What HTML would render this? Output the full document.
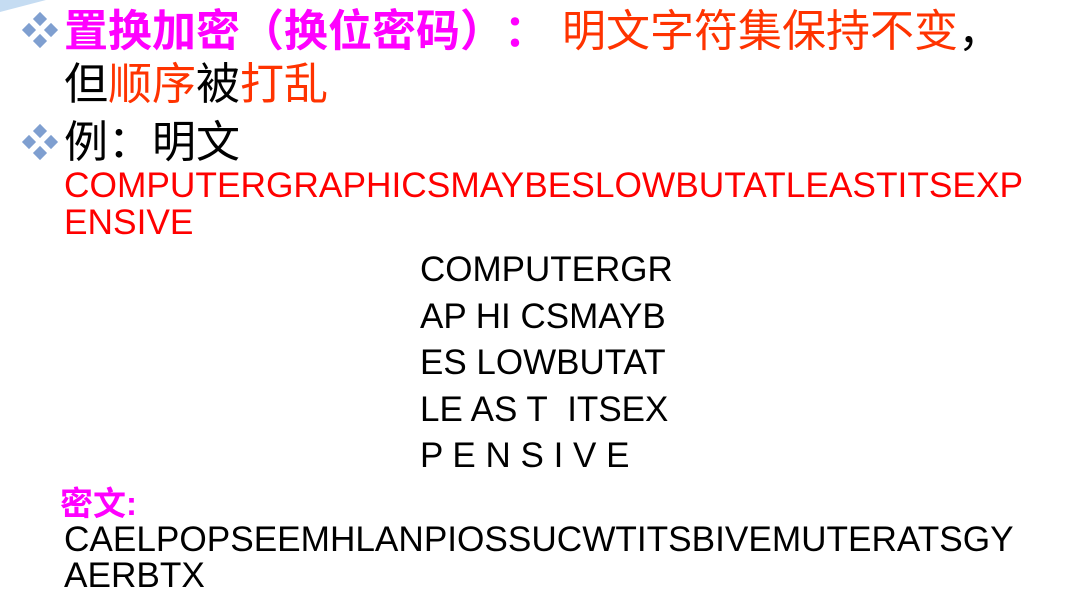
<!DOCTYPE html>
<html><head><meta charset="utf-8"><style>
body{margin:0;width:1068px;height:591px;background:#fff;position:relative;overflow:hidden;font-family:"Liberation Sans","Noto Sans CJK SC",sans-serif;}
.l{position:absolute;white-space:nowrap;line-height:1;}
.cn{font-size:44px;}
.m{color:#f0f;}
.o{color:#ff3300;}
.r{color:#f00;font-size:35.3px;}
.b{font-size:35.2px;color:#000;}
.c{font-size:35px;color:#000;left:420px;}
.p{display:inline-block;width:44px;}
.pr{display:inline-block;width:44px;text-align:right;}
.pc{display:inline-block;width:58px;}
</style></head><body>
<svg style="position:absolute;left:0;top:0" width="1068" height="591">
<polygon points="0,0 46,0 0,12" fill="#c5dcf2"/>
<g fill="#7f9fd0">
<g transform="translate(40,30)"><rect x="-5" y="-16" width="10" height="10" transform="rotate(45 0 -11)"/><rect x="-5" y="6" width="10" height="10" transform="rotate(45 0 11)"/><rect x="-16" y="-5" width="10" height="10" transform="rotate(45 -11 0)"/><rect x="6" y="-5" width="10" height="10" transform="rotate(45 11 0)"/></g>
<g transform="translate(40,142)"><rect x="-5" y="-16" width="10" height="10" transform="rotate(45 0 -11)"/><rect x="-5" y="6" width="10" height="10" transform="rotate(45 0 11)"/><rect x="-16" y="-5" width="10" height="10" transform="rotate(45 -11 0)"/><rect x="6" y="-5" width="10" height="10" transform="rotate(45 11 0)"/></g>
</g></svg>
<div class="l cn" style="left:64px;top:10px"><span class="m" style="font-weight:bold">置换加密<span class="pr">（</span>换位密码<span class="p">）</span><span class="pc">：</span></span><span class="o">明文字符集保持不变</span>，</div>
<div class="l cn" style="left:64px;top:63px">但<span class="o">顺序</span>被<span class="o">打乱</span></div>
<div class="l cn" style="left:64px;top:121px">例：明文</div>
<div class="l r" style="left:64px;top:168px">COMPUTERGRAPHICSMAYBESLOWBUTATLEASTITSEXP</div>
<div class="l r" style="left:64px;top:205px">ENSIVE</div>
<div class="l c" style="top:252px">COMPUTERGR</div>
<div class="l c" style="top:299px">AP HI CSMAYB</div>
<div class="l c" style="top:345px">ES LOWBUTAT</div>
<div class="l c" style="top:392px">LE AS T&nbsp; ITSEX</div>
<div class="l c" style="top:438px">P E N S I V E</div>
<div class="l m" style="left:60px;top:487px;font-size:33px;font-weight:bold">密文:</div>
<div class="l b" style="left:64px;top:522px">CAELPOPSEEMHLANPIOSSUCWTITSBIVEMUTERATSGY</div>
<div class="l b" style="left:64px;top:558px">AERBTX</div>
</body></html>
